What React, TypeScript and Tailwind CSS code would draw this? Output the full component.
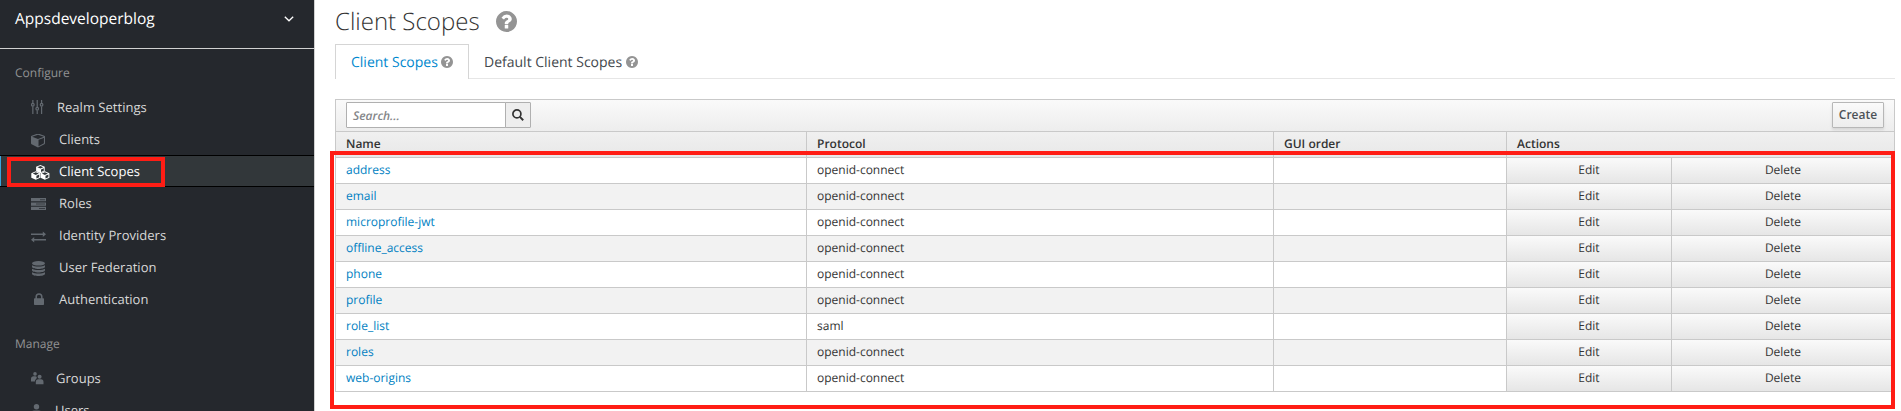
import type { ReactNode } from "react";

const stroke = { fill: "none", stroke: "currentColor" } as const;

function SlidersIcon() {
  return (
    <svg width="13" height="14" viewBox="0 0 14 14" preserveAspectRatio="none" {...stroke} strokeWidth="1.3">
      <path d="M2 0v3.2M2 6.4V14M6.7 0v7M6.7 10.4V14M11.4 0v3.2M11.4 6.4V14" />
      <circle cx="2" cy="4.8" r="1.4" />
      <circle cx="6.7" cy="8.7" r="1.4" />
      <circle cx="11.4" cy="4.8" r="1.4" />
    </svg>
  );
}

function CubeIcon() {
  return (
    <svg width="14" height="14" viewBox="-64 60 1664 1664" fill="currentColor" fillRule="evenodd">
      <path d="M832 1510l640-349v-636l-640 233v752zM768 646l698-254-698-254-698 254zM1600 384v768q0 35-18 65t-49 47l-704 384q-28 16-61 16t-61-16l-704-384q-31-17-49-47t-18-65v-768q0-40 23-73t61-47l704-256q22-8 44-8t44 8l704 256q38 14 61 47t23 73z" />
    </svg>
  );
}

function CubesIcon() {
  return (
    <svg width="19" height="15" viewBox="0 0 19 15">
      <g fill="currentColor">
        <path d="m9.4 0 4.3 1.7v4.6L9.4 8.3 5.1 6.3V1.7Z" />
        <path d="m4.8 6.3 4.4 1.9v4.6l-4.4 2L.3 12.8V8.2Z" />
        <path d="m13.9 6.3 4.5 1.9v4.6l-4.5 2-4.4-2V8.2Z" />
      </g>
      <g fill="#32373a">
        <path d="m9.4 .9 3 1.3-3 1.3-3-1.3ZM10 4.4l2.8-1.200v2.600L10 7.100Z" />
        <path d="m4.800 7.300 3 1.300-3 1.300-3-1.300ZM5.400 10.800l2.800-1.200v2.600l-2.800 1.300Z" />
        <path d="m13.900 7.300 3 1.300-3 1.300-3-1.300ZM14.500 10.800l2.900-1.200v2.600l-2.900 1.300Z" />
      </g>
    </svg>
  );
}

function RolesIcon() {
  return (
    <svg width="15" height="12" viewBox="0 0 15 12">
      <path d="M0 0h15v3.300H0ZM0 4.400h15v3.300H0ZM0 8.800h15V12H0Z" fill="currentColor" />
      <path d="M9 1.200h5v1H9ZM5 5.600h9v1H5ZM8 10h6v1H8Z" fill="#25282d" fillOpacity=".7" />
    </svg>
  );
}

function ExchangeIcon() {
  return (
    <svg width="15" height="12" viewBox="0 0 15 12" fill="currentColor">
      <path d="M0 2.400h11.800V.400L15 3.200l-3.200 2.800V4H0ZM15 8H3.200V6L0 8.800l3.200 2.800V9.600H15Z" />
    </svg>
  );
}

function DatabaseIcon() {
  return (
    <svg width="13" height="15" viewBox="0 0 13 15" fill="currentColor">
      <ellipse cx="6.500" cy="2.300" rx="6.500" ry="2.300" />
      <path d="M0 4.200c2.600 1.800 10.400 1.800 13 0v1.600c0 2.900-13 2.900-13 0ZM0 7.700c2.600 1.800 10.400 1.800 13 0v1.600c0 2.900-13 2.900-13 0ZM0 11.200c2.600 1.800 10.400 1.800 13 0v1.500c0 3-13 3-13 0Z" />
    </svg>
  );
}

function LockIcon() {
  return (
    <svg width="10" height="12" viewBox="0 0 10 12">
      <path d="M2.200 6V3.700a2.800 2.800 0 0 1 5.600 0V6" {...stroke} strokeWidth="1.500" />
      <rect y="5.200" width="10" height="6.800" rx=".7" fill="currentColor" />
    </svg>
  );
}

function GroupIcon() {
  return (
    <svg width="13" height="13" viewBox="0 0 13 13" fill="currentColor">
      <circle cx="4" cy="1.900" r="1.800" />
      <circle cx="8.600" cy="4.800" r="2" />
      <path d="M0 9.400V7c0-1.800 1-2.800 2.600-2.800h1.600c.8 0 1.200.3 1.600.8C5.600 6 5.600 6.500 5.200 7 4.300 7.500 4 8.400 3.900 9.400ZM4.800 12.300V10c0-1.700 1-2.700 2.500-2.700h2.800c1.500 0 2.400 1 2.400 2.700v2.300Z" />
    </svg>
  );
}

function UserIcon() {
  return (
    <svg width="11" height="13" viewBox="0 0 11 13" fill="currentColor">
      <circle cx="5.500" cy="2.700" r="2.700" />
      <path d="M0 13V9.600C0 7.600 1.300 6.400 3 6.400h5c1.700 0 3 1.200 3 3.200V13Z" />
    </svg>
  );
}

function HelpIcon({ size }: { size: number }) {
  return (
    <svg width={size} height={size} viewBox="0 0 1536 1536" fill="#949494" className="shrink-0">
      <path d="M896 1248v-192q0-14-9-23t-23-9H672q-14 0-23 9t-9 23v192q0 14 9 23t23 9h192q14 0 23-9t9-23zm256-672q0-88-55.500-163T958 297t-170-41q-243 0-371 213-15 24 8 42l132 100q7 6 19 6 16 0 25-12 53-68 86-92 34-24 86-24 48 0 85.500 26t37.500 59q0 38-20 61t-68 45q-63 28-115.500 86.500T640 892v36q0 14 9 23t23 9h192q14 0 23-9t9-23q0-19 21.500-49.500T972 829q32-18 49-28.500t46-35 44.500-48 28-60.500 12.500-81zm384 192q0 209-103 385.500T1153.500 1433 768 1536t-385.500-103T103 1153.500 0 768t103-385.500T382.500 103 768 0t385.500 103T1433 382.500 1536 768z" />
    </svg>
  );
}

type Item = { label: string; icon: ReactNode; iconPad: string; textPad: string; active?: boolean };

const configure: Item[] = [
  { label: "Realm Settings", icon: <SlidersIcon />, iconPad: "pl-[31px]", textPad: "w-[57px]" },
  { label: "Clients", icon: <CubeIcon />, iconPad: "pl-[31px] pt-[3px]", textPad: "w-[59px]" },
  { label: "Client Scopes", icon: <CubesIcon />, iconPad: "pl-[31px] pt-[3px]", textPad: "w-[59px]", active: true },
  { label: "Roles", icon: <RolesIcon />, iconPad: "pl-[31px] pt-[2px]", textPad: "w-[59px]" },
  { label: "Identity Providers", icon: <ExchangeIcon />, iconPad: "pl-[31px] pt-[3px]", textPad: "w-[59px]" },
  { label: "User Federation", icon: <DatabaseIcon />, iconPad: "pl-[32px] pt-[2px]", textPad: "w-[59px]" },
  { label: "Authentication", icon: <LockIcon />, iconPad: "pl-[34px]", textPad: "w-[59px]" },
];

const manage: Item[] = [
  { label: "Groups", icon: <GroupIcon />, iconPad: "pl-[31px]", textPad: "w-[56px]" },
  { label: "Users", icon: <UserIcon />, iconPad: "pl-[31px]", textPad: "w-[55px]" },
];

function NavItem({ label, icon, iconPad, textPad, active }: Item) {
  return (
    <li
      className={
        active
          ? "flex h-8 items-center border-y border-black bg-[#32373a] text-white shadow-[inset_1px_0_0_#39a5dc]"
          : "flex h-8 items-center text-[#d8d8d8]"
      }
    >
      <span className={`flex shrink-0 items-center ${iconPad} ${textPad} ${active ? "text-white" : "text-[#636970]"}`}>
        {icon}
      </span>
      <span className="text-[13px] leading-5 tracking-[0.02px] [text-rendering:geometricPrecision]">{label}</span>
    </li>
  );
}

function Sidebar() {
  return (
    <aside className="relative h-full w-[315px] shrink-0 overflow-hidden border-r border-[#d1d1d1] bg-[#25282d]">
      <div className="flex h-[49px] items-start justify-between border-b border-[#d1d1d1] pt-[6px] pr-5 pl-[15px]">
        <span className="text-[15.5px] leading-[24px] text-white [text-rendering:geometricPrecision]">
          Appsdeveloperblog
        </span>
        <svg width="10" height="6" viewBox="0 0 10 6" className="mt-[10px]" fill="none" stroke="#fff" strokeWidth="1.300">
          <path d="m.8.800 4.200 4 4.200-4" />
        </svg>
      </div>
      <h2 className="flex h-[42px] items-center pt-[5px] pl-[15px] text-[12px] text-[#929394] [text-rendering:geometricPrecision]">
        Configure
      </h2>
      <ul>{configure.map((i) => <NavItem key={i.label} {...i} />)}</ul>
      <h2 className="flex h-[47px] items-center pt-[10px] pl-[15px] text-[12px] text-[#929394] [text-rendering:geometricPrecision]">
        Manage
      </h2>
      <ul>{manage.map((i) => <NavItem key={i.label} {...i} />)}</ul>
      <div className="absolute top-[157px] left-[7px] h-[30px] w-[158px] border-4 border-[#ff1d15]" />
    </aside>
  );
}

const rows = [
  ["address", "openid-connect"],
  ["email", "openid-connect"],
  ["microprofile-jwt", "openid-connect"],
  ["offline_access", "openid-connect"],
  ["phone", "openid-connect"],
  ["profile", "openid-connect"],
  ["role_list", "saml"],
  ["roles", "openid-connect"],
  ["web-origins", "openid-connect"],
];

const th = "border-l border-[#c9c9c9] pl-[10px] leading-[23px]";
const action = "border-l border-[#c9c9c9] bg-linear-to-b from-[#fafafa] to-[#e6e6e6] text-center";

function ScopesTable() {
  return (
    <div className="mt-5 w-[1560px] border border-[#c9c9c9] text-[12px] text-[#333] [text-rendering:geometricPrecision]">
      <div className="flex h-[31px] items-start justify-between bg-linear-to-b from-[#fafafa] to-[#ededed] pt-[2px] pr-[10px] pl-[10px]">
        <div className="flex h-[26px]">
          <div className="w-[160px] rounded-l-[1px] border border-[#b0b0b0] bg-white pl-[6px] leading-[25px] font-semibold text-[#85878a] italic">
            Search...
          </div>
          <div className="-ml-px flex w-[26px] items-center justify-center rounded-r-[1px] border border-[#b0b0b0] bg-[#eee]">
            <svg width="12" height="12" viewBox="0 0 12 12" fill="none" stroke="#333" strokeWidth="1.700">
              <circle cx="4.900" cy="4.900" r="4" />
              <path d="m7.900 7.900 3.300 3.300" strokeWidth="2" />
            </svg>
          </div>
        </div>
        <button className="h-[26px] w-[52px] rounded-[1px] border border-[#b7b7b7] bg-linear-to-b from-[#fafafa] to-[#ededed] pb-px font-semibold text-[#4d5258] shadow-[0_2px_3px_rgba(3,3,3,0.1)]">
          Create
        </button>
      </div>
      <div className="grid h-[26px] grid-cols-[470px_467px_233px_388px] border-t border-[#c9c9c9] bg-linear-to-b from-[#f0f0f0] to-[#e8e8e8] font-semibold">
        <span className="pl-[10px] leading-[23px]">Name</span>
        <span className={th}>Protocol</span>
        <span className={th}>GUI order</span>
        <span className={th}>Actions</span>
      </div>
      {rows.map(([name, protocol], i) => (
        <div
          key={name}
          className={`grid h-[26px] grid-cols-[470px_467px_233px_165px_223px] border-t border-[#c9c9c9] leading-[23px] ${i % 2 ? "bg-[#f2f2f2]" : "bg-white"}`}
        >
          <a className="pl-[10px] text-[#007fc2]">{name}</a>
          <span className="border-l border-[#c9c9c9] pl-[10px]">{protocol}</span>
          <span className="border-l border-[#c9c9c9]" />
          <span className={action}>Edit</span>
          <span className={action}>Delete</span>
        </div>
      ))}
    </div>
  );
}

export default function App() {
  return (
    <div className="relative flex h-[411px] w-[1901px] overflow-hidden bg-white font-['Open_Sans',sans-serif]">
      <Sidebar />
      <main className="min-w-0 flex-1 pl-5">
        <div className="flex h-[44px] items-center pb-px [text-rendering:geometricPrecision]">
          <h1 className="text-[24px] leading-[32px] font-light text-[#333]">Client Scopes</h1>
          <span className="ml-4">
            <HelpIcon size={21} />
          </span>
        </div>
        <div className="flex h-[35px] w-[1560px] text-[14px] [text-rendering:geometricPrecision]">
          <div className="flex w-[134px] items-center gap-[3px] border border-b-0 border-[#d5d5d5] pl-[15px] text-[#0088ce]">
            Client Scopes <HelpIcon size={12} />
          </div>
          <div className="flex flex-1 items-center gap-1 border-b border-[#e6e6e6] pt-[2px] pl-[15px] text-[#43484d]">
            Default Client Scopes <HelpIcon size={12} />
          </div>
        </div>
        <ScopesTable />
      </main>
      <div className="absolute top-[151px] left-[330px] h-[258px] w-[1565px] border-4 border-[#ff1d15]" />
    </div>
  );
}
